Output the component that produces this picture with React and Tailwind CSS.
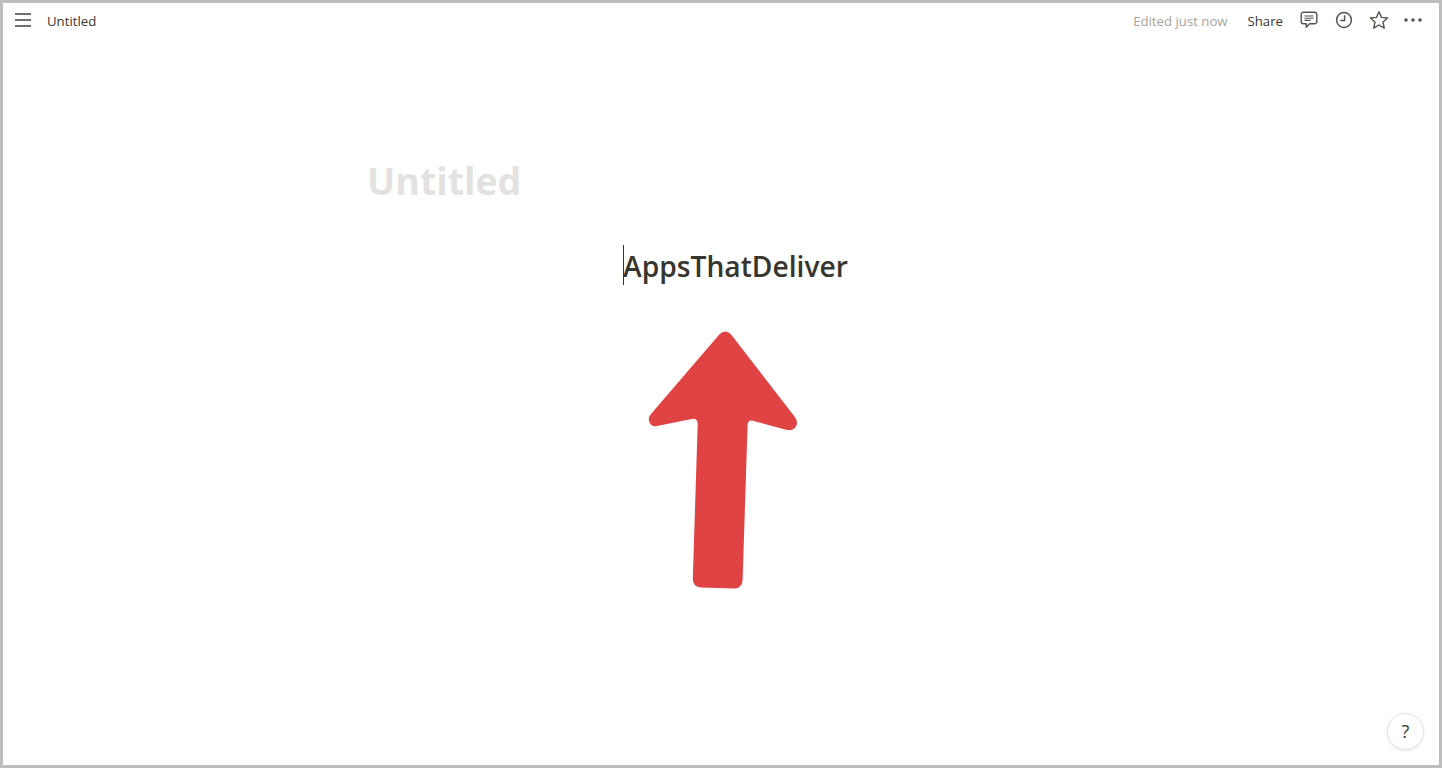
import React from 'react';

const font = { fontFamily: '"Open Sans", "Noto Sans", sans-serif' };

function Arrow() {
  return (
    <svg width="170" height="270" viewBox="640 325 170 270" className="block">
      <path
        fill="#e04343"
        d="M719.3 334.5 Q725.5 328.5 731.5 335 L794.5 416.5 Q798.5 422 796 426.5 Q792.5 431.5 786 429.8 L752.7 420.7 Q748 419.5 747.6 425 L742.6 580 Q742 588.6 734 588.4 L701 587.4 Q692.6 587 692.8 578.3 L697.7 424 Q697.5 418 691.7 419 L657 426 Q651.5 427 649.5 422.5 Q647.5 418 651 414 Z"
      />
    </svg>
  );
}

function TopBar() {
  return (
    <header className="flex h-[35px] shrink-0 items-center justify-between pl-3 pr-[17px]">
      <div className="flex items-center">
        <svg width="16" height="14" viewBox="0 0 16 14" className="block">
          <path d="M0 1h16M0 7h16M0 13h16" stroke="#6f6f6f" strokeWidth="2" />
        </svg>
        <span className="ml-4 mt-[2px] text-[13.2px] text-[#37352f]">Untitled</span>
      </div>
      <div className="flex items-center">
        <span className="mt-[2px] text-[13.2px] text-[#a5a4a1]">Edited just now</span>
        <span className="ml-5 mt-[2px] text-[13.2px] text-[#37352f]">Share</span>
        <svg width="18" height="18" viewBox="0 0 18 18" fill="none" className="ml-[17px] block">
          <path d="M3.5 1.2h11a2.3 2.3 0 0 1 2.3 2.3v7a2.3 2.3 0 0 1-2.3 2.3H9.5l-3.3 3.4v-3.4H3.5a2.3 2.3 0 0 1-2.3-2.3v-7a2.3 2.3 0 0 1 2.3-2.3z" stroke="#55534e" strokeWidth="1.4" strokeLinejoin="round" />
          <path d="M4.5 5h9M4.5 7.2h9M4.5 9.4h6" stroke="#55534e" strokeWidth="1.1" />
        </svg>
        <svg width="18" height="18" viewBox="0 0 18 18" fill="none" className="ml-[17px] block">
          <circle cx="9" cy="9" r="7.4" stroke="#55534e" strokeWidth="1.5" />
          <path d="M9.6 4.2v5.3H5.4" stroke="#55534e" strokeWidth="1.5" />
        </svg>
        <svg width="20" height="20" viewBox="0 0 20 20" fill="none" className="ml-[16px] block">
          <path d="M10 1.8l2.5 5.6 6.1.6-4.6 4.1 1.3 6-5.3-3.1-5.3 3.1 1.3-6L1.4 8l6.1-.6z" stroke="#55534e" strokeWidth="1.4" strokeLinejoin="round" />
        </svg>
        <svg width="18" height="4" viewBox="0 0 18 4" className="ml-[15px] block">
          <circle cx="2" cy="2" r="1.8" fill="#55534e" />
          <circle cx="9" cy="2" r="1.8" fill="#55534e" />
          <circle cx="16" cy="2" r="1.8" fill="#55534e" />
        </svg>
      </div>
    </header>
  );
}

export default function App() {
  return (
    <div className="flex h-[768px] flex-col overflow-hidden border-[3px] border-[#bdbdbd] bg-white" style={font}>
      <TopBar />
      <main className="flex flex-1 flex-col">
        <h1 className="ml-[364px] mt-[118px] text-[37.5px] font-bold leading-[50px] text-[#e3e2e0]">Untitled</h1>
        <div className="ml-[620px] mt-[39px] flex h-[40px] items-center border-l border-[#37352f]">
          <span className="-ml-px mt-[2px] text-[28.2px] font-semibold leading-[40px] text-[#37352f]">AppsThatDeliver</span>
        </div>
        <div className="ml-[637px] mt-[40px]">
          <Arrow />
        </div>
        <div className="mr-[15px] mt-auto mb-[15px] flex justify-end">
          <button className="flex h-[37px] w-[37px] items-center justify-center rounded-full border border-[#e4e4e2] bg-white text-[18px] text-[#37352f] shadow-[0_1px_3px_rgba(0,0,0,0.1)]">?</button>
        </div>
      </main>
    </div>
  );
}
